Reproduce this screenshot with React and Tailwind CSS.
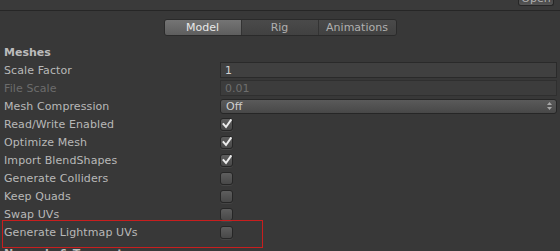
import React from "react";

const Check = () => (
    <svg width="10" height="10" viewBox="0 0 10 10" className="block">
        <polyline points="1.5,5.2 4,8 8.8,1.2" fill="none" stroke="#ececec" strokeWidth="2" strokeLinecap="square" />
    </svg>
);

const Checkbox = ({ checked }) => (
    <div className="w-[13px] h-[13px] rounded-[3px] border border-[#262626] bg-gradient-to-b from-[#5e5e5e] to-[#484848] flex items-center justify-center shadow-[0_1px_0_#454545]">
        {checked && <Check />}
    </div>
);

const Row = ({ label, dim, children }) => (
    <div className="h-[18px] flex items-center">
        <div className={`w-[220px] pl-[4px] tracking-[0.1px] ${dim ? "text-[#6c6c6c]" : "text-[#b8b8b8]"}`}>{label}</div>
        <div className="flex-1 flex items-center pr-[3px]">{children}</div>
    </div>
);

const rows = [
    { label: "Read/Write Enabled", checked: true },
    { label: "Optimize Mesh", checked: true },
    { label: "Import BlendShapes", checked: true },
    { label: "Generate Colliders", checked: false },
    { label: "Keep Quads", checked: false },
    { label: "Swap UVs", checked: false },
    { label: "Generate Lightmap UVs", checked: false },
];

export default function App() {
    return (
        <div className="relative w-[560px] h-[251px] overflow-hidden bg-[#383838] text-[11px] leading-none" style={{ fontFamily: '"DejaVu Sans", sans-serif' }}>
            {/* top strip */}
            <div className="h-[11px] bg-[#3a3a3a] border-b border-[#262626] flex justify-end pr-[6px]">
                <div className="w-[36px] h-[6px] overflow-hidden rounded-b-[3px] border border-t-0 border-[#262626] bg-gradient-to-b from-[#4a4a4a] to-[#555555]">
                    <div className="-mt-[7px] text-center text-[#b0b0b0]">Open</div>
                </div>
            </div>

            {/* tabs */}
            <div className="flex justify-center mt-[8px]">
                <div className="flex h-[17px] rounded-[3px] border border-[#2a2a2a] overflow-hidden">
                    <div className="w-[77px] flex items-center justify-center bg-gradient-to-b from-[#747474] to-[#5e5e5e] text-[#e8e8e8] border-r border-[#333333]">Model</div>
                    <div className="w-[77px] flex items-center justify-center bg-gradient-to-b from-[#4a4a4a] to-[#414141] text-[#b0b0b0] border-r border-[#333333]">Rig</div>
                    <div className="w-[77px] flex items-center justify-center bg-gradient-to-b from-[#4a4a4a] to-[#414141] text-[#b0b0b0]">Animations</div>
                </div>
            </div>

            {/* Meshes */}
            <div className="mt-[7px]">
                <div className="h-[18px] flex items-center pl-[4px] font-bold text-[#bcbcbc]">Meshes</div>
                <Row label="Scale Factor">
                    <div className="flex-1 h-[16px] border border-[#2a2a2a] bg-[#404040] flex items-center pl-[4px] text-[#d2d2d2]">1</div>
                </Row>
                <Row label="File Scale" dim>
                    <div className="flex-1 h-[16px] border border-[#2f2f2f] bg-[#3c3c3c] flex items-center pl-[4px] text-[#6e6e6e]">0.01</div>
                </Row>
                <Row label="Mesh Compression">
                    <div className="flex-1 h-[15px] rounded-[3px] border border-[#262626] bg-gradient-to-b from-[#5a5a5a] to-[#484848] flex items-center justify-between pl-[5px] pr-[4px] text-[#cfcfcf]">
                        <span>Off</span>
                        <svg width="5" height="8" viewBox="0 0 5 8">
                            <polygon points="2.5,0 5,3 0,3" fill="#a8a8a8" />
                            <polygon points="0,5 5,5 2.5,8" fill="#a8a8a8" />
                        </svg>
                    </div>
                </Row>
                {rows.map((r) => (
                    <Row key={r.label} label={r.label}>
                        <Checkbox checked={r.checked} />
                    </Row>
                ))}
                <div className="h-[18px] flex items-center pl-[4px] font-bold text-[#bcbcbc] mt-[3px]">Normals &amp; Tangents</div>
            </div>

            {/* red annotation box */}
            <div className="absolute left-[2px] top-[220px] w-[261px] h-[28px] border border-[#c81e1e]" />
        </div>
    );
}
